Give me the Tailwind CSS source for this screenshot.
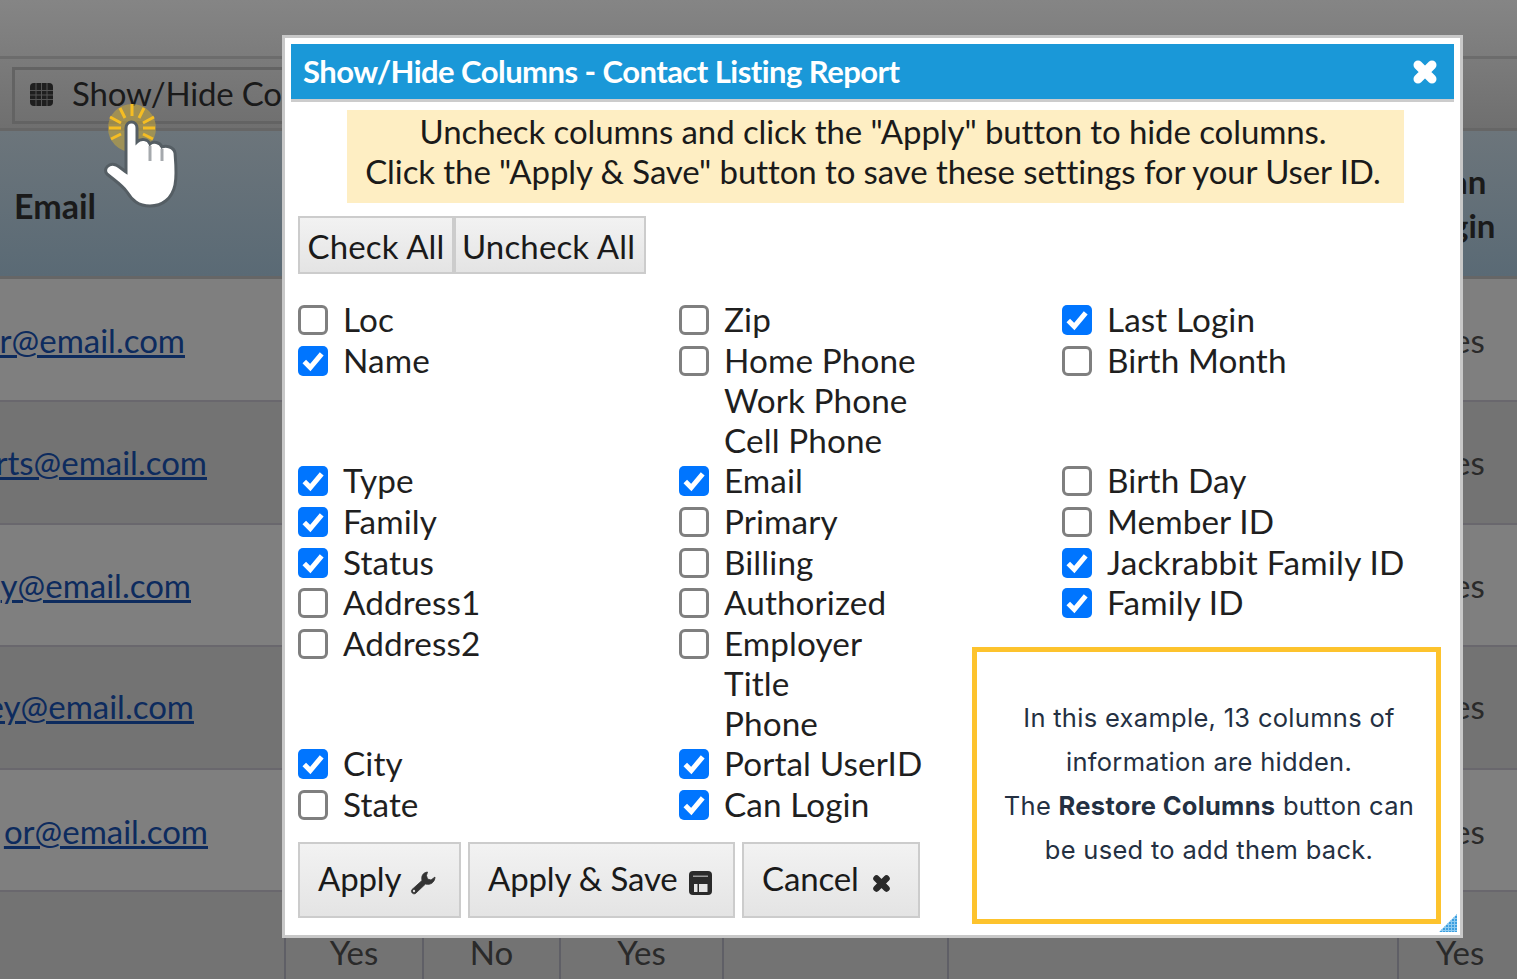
<!DOCTYPE html>
<html><head><script src="https://cdn.jsdelivr.net/npm/@tailwindcss/browser@4"></script></head>
<body class="m-0 overflow-hidden">
<div class="relative w-[1517px] h-[979px] overflow-hidden bg-[#737373] font-['Lato',sans-serif] text-[#1a1a1a]">
  <!-- page behind -->
  <div class="h-[59px] bg-gradient-to-b from-[#858585] to-[#7c7c7c] border-b-[3px] border-[#6c6c6c]"></div>
  <div class="h-[69px] bg-gradient-to-b from-[#7b7b7b] to-[#6f6f6f] pt-[8px] pl-[12px]">
    <div class="w-[400px] h-[57px] border-[3px] border-[#636363] flex items-center pl-[15px] gap-[19px] text-[33px] pb-[3px] tracking-[-0.2px]">
      <svg class="w-[23px] h-[23px]" viewBox="0 0 23 23"><rect width="23" height="23" rx="4" fill="#1f1f1f"/><path d="M0 7.5h23M0 12h23M0 16.5h23M6 0v23M11.5 0v23M17 0v23" stroke="#555" stroke-width="1"/></svg>
      <span class="whitespace-nowrap">Show/Hide Columns</span>
    </div>
  </div>
  <div class="h-[151px] bg-gradient-to-b from-[#6c757b] to-[#5a6a75] border-y-[3px] border-[#666] flex items-center relative">
    <span class="ml-[14px] text-[34px] font-bold mt-[4px]">Email</span>
    <span class="absolute left-[1451px] top-[28px] text-[33px] font-bold leading-[44px] whitespace-nowrap">an<br>gin</span>
  </div>
  <div class="text-[33px] text-[#0d2b5e]">
    <div class="h-[123px] bg-[#7f7f7f] border-b-[2px] border-[#69676d] leading-[44px] relative"><a class="underline decoration-[3px] absolute top-[39px] right-[1332px]">r@email.com</a><span class="absolute top-[39px] left-[1436px] text-[#2a2a2a]">Yes</span></div>
    <div class="h-[123px] bg-[#737373] border-b-[2px] border-[#69676d] leading-[44px] relative"><a class="underline decoration-[3px] absolute top-[38px] right-[1310px]">rts@email.com</a><span class="absolute top-[38px] left-[1436px] text-[#2a2a2a]">Yes</span></div>
    <div class="h-[122px] bg-[#7f7f7f] border-b-[2px] border-[#69676d] leading-[44px] relative"><a class="underline decoration-[3px] absolute top-[38px] right-[1326px]">y@email.com</a><span class="absolute top-[38px] left-[1436px] text-[#2a2a2a]">Yes</span></div>
    <div class="h-[123px] bg-[#737373] border-b-[2px] border-[#69676d] leading-[44px] relative"><a class="underline decoration-[3px] absolute top-[37px] right-[1323px]">ey@email.com</a><span class="absolute top-[37px] left-[1436px] text-[#2a2a2a]">Yes</span></div>
    <div class="h-[122px] bg-[#7f7f7f] border-b-[2px] border-[#69676d] leading-[44px] relative"><a class="underline decoration-[3px] absolute top-[39px] right-[1309px]">or@email.com</a><span class="absolute top-[39px] left-[1436px] text-[#2a2a2a]">Yes</span></div>
  </div>
  <div class="absolute left-[284px] top-[935px] h-[44px] flex text-[33px] text-[#2a2a2a] leading-[34px]">
    <div class="w-[140px] border-x-[2px] border-[#5f5f66] text-center">Yes</div>
    <div class="w-[137px] border-r-[2px] border-[#5f5f66] text-center">No</div>
    <div class="w-[163px] border-r-[2px] border-[#5f5f66] text-center">Yes</div>
    <div class="w-[225px] border-r-[2px] border-[#5f5f66]"></div>
    <div class="w-[450px] border-r-[2px] border-[#5f5f66]"></div>
    <div class="w-[122px] text-center">Yes</div>
  </div>

  <!-- hand -->
  <svg class="absolute left-[100px] top-[100px]" width="85" height="112" viewBox="0 0 85 112">
    <circle cx="32" cy="28" r="24" fill="#c9a93a" fill-opacity=".55"/>
    <g stroke="#f5bd22" stroke-width="3"><path d="M32 4v12M20 8l5 10M44 8l-5 10M10 17l11 6M54 17l-11 6M9 28h12M43 28h12M11 39l10-5M53 39l-10-5"/></g>
    <path d="M26 28C26 20 37 20 37 28V42C41 38 48 39 50 44C53 41 60 42 62 47C66 45 74 47 75 53C76 65 77 75 75 85C72 99 62 106 50 106C38 106 32 100 27 92C22 85 14 80 7 74C3 69 9 62 16 65C20 67 23 70 26 72Z" fill="#fff" stroke="#555e64" stroke-width="3"/>
    <path d="M50 46v15M62 49v12" stroke="#a5a9ad" stroke-width="3"/>
  </svg>

  <!-- modal -->
  <div class="absolute left-[282px] top-[35px] w-[1181px] h-[903px] bg-white border-[3px] border-[#c8c8c8] pt-[6px] pl-[6px] pr-[6px]">
    <div class="h-[58px] bg-[#1a98d8] border-b-[3px] border-[#cccccc] flex items-center justify-between pl-[12px] pr-[16px]">
      <span class="text-white font-bold text-[31px] tracking-[-0.54px] whitespace-nowrap">Show/Hide Columns - Contact Listing Report</span>
      <svg class="w-[26px] h-[26px]" viewBox="0 0 26 26"><path d="M6 6L20 20M20 6L6 20" stroke="#fff" stroke-width="9" stroke-linecap="round"/></svg>
    </div>
    <div class="ml-[56px] mt-[8px] w-[1057px] h-[93px] bg-[#feeec3] text-center text-[33px] leading-[40px] pt-[1px] pr-[5px] tracking-[-0.09px]">Uncheck columns and click the "Apply" button to hide columns.<br>Click the "Apply &amp; Save" button to save these settings for your User ID.</div>
    <div class="ml-[7px] mt-[13px] flex h-[58px] text-[33px] tracking-[0.15px]">
      <button class="w-[156px] pt-[3px] border-[2px] border-[#cccccc] bg-gradient-to-b from-[#f2f2f2] to-[#e4e4e4] text-[#1a1a1a]">Check All</button>
      <button class="w-[192px] pt-[3px] pr-[3px] border-[2px] border-[#cccccc] bg-gradient-to-b from-[#f2f2f2] to-[#e4e4e4] text-[#1a1a1a]">Uncheck All</button>
    </div>
    <div class="ml-[7px] mt-[25px] flex text-[33.3px] tracking-[0.1px] leading-[40px] text-[#1f1f1f]">
      <div class="w-[381px] shrink-0">
        <label class="flex items-center gap-[15px] h-[40.6px]"><input type="checkbox" class="mt-[2px] w-[30px] h-[30px] appearance-none rounded-[6px] border-[3px] border-[#7f7f7f] bg-white"><span>Loc</span></label>
        <label class="flex items-center gap-[15px] h-[40.6px]"><span class="mt-[2px] w-[30px] h-[30px] rounded-[5px] bg-[#0075ff] flex items-center justify-center"><svg width="24" height="24" viewBox="0 0 22 22"><path d="M3 11.5l5.5 5.5L19 4.5" fill="none" stroke="#fff" stroke-width="4.6"/></svg></span><span>Name</span></label>
        <div class="h-[80px]"></div>
        <label class="flex items-center gap-[15px] h-[40.6px]"><span class="mt-[2px] w-[30px] h-[30px] rounded-[5px] bg-[#0075ff] flex items-center justify-center"><svg width="24" height="24" viewBox="0 0 22 22"><path d="M3 11.5l5.5 5.5L19 4.5" fill="none" stroke="#fff" stroke-width="4.6"/></svg></span><span>Type</span></label>
        <label class="flex items-center gap-[15px] h-[40.6px]"><span class="mt-[2px] w-[30px] h-[30px] rounded-[5px] bg-[#0075ff] flex items-center justify-center"><svg width="24" height="24" viewBox="0 0 22 22"><path d="M3 11.5l5.5 5.5L19 4.5" fill="none" stroke="#fff" stroke-width="4.6"/></svg></span><span>Family</span></label>
        <label class="flex items-center gap-[15px] h-[40.6px]"><span class="mt-[2px] w-[30px] h-[30px] rounded-[5px] bg-[#0075ff] flex items-center justify-center"><svg width="24" height="24" viewBox="0 0 22 22"><path d="M3 11.5l5.5 5.5L19 4.5" fill="none" stroke="#fff" stroke-width="4.6"/></svg></span><span>Status</span></label>
        <label class="flex items-center gap-[15px] h-[40.6px]"><input type="checkbox" class="mt-[2px] w-[30px] h-[30px] appearance-none rounded-[6px] border-[3px] border-[#7f7f7f] bg-white"><span>Address1</span></label>
        <label class="flex items-center gap-[15px] h-[40.6px]"><input type="checkbox" class="mt-[2px] w-[30px] h-[30px] appearance-none rounded-[6px] border-[3px] border-[#7f7f7f] bg-white"><span>Address2</span></label>
        <div class="h-[80px]"></div>
        <label class="flex items-center gap-[15px] h-[40.6px]"><span class="mt-[2px] w-[30px] h-[30px] rounded-[5px] bg-[#0075ff] flex items-center justify-center"><svg width="24" height="24" viewBox="0 0 22 22"><path d="M3 11.5l5.5 5.5L19 4.5" fill="none" stroke="#fff" stroke-width="4.6"/></svg></span><span>City</span></label>
        <label class="flex items-center gap-[15px] h-[40.6px]"><input type="checkbox" class="mt-[2px] w-[30px] h-[30px] appearance-none rounded-[6px] border-[3px] border-[#7f7f7f] bg-white"><span>State</span></label>
      </div>
      <div class="w-[383px] shrink-0">
        <label class="flex items-center gap-[15px] h-[40.6px]"><input type="checkbox" class="mt-[2px] w-[30px] h-[30px] appearance-none rounded-[6px] border-[3px] border-[#7f7f7f] bg-white"><span>Zip</span></label>
        <label class="flex items-center gap-[15px] h-[40.6px]"><input type="checkbox" class="mt-[2px] w-[30px] h-[30px] appearance-none rounded-[6px] border-[3px] border-[#7f7f7f] bg-white"><span>Home Phone</span></label>
        <div class="pl-[45px] h-[40px]">Work Phone</div>
        <div class="pl-[45px] h-[40px]">Cell Phone</div>
        <label class="flex items-center gap-[15px] h-[40.6px]"><span class="mt-[2px] w-[30px] h-[30px] rounded-[5px] bg-[#0075ff] flex items-center justify-center"><svg width="24" height="24" viewBox="0 0 22 22"><path d="M3 11.5l5.5 5.5L19 4.5" fill="none" stroke="#fff" stroke-width="4.6"/></svg></span><span>Email</span></label>
        <label class="flex items-center gap-[15px] h-[40.6px]"><input type="checkbox" class="mt-[2px] w-[30px] h-[30px] appearance-none rounded-[6px] border-[3px] border-[#7f7f7f] bg-white"><span>Primary</span></label>
        <label class="flex items-center gap-[15px] h-[40.6px]"><input type="checkbox" class="mt-[2px] w-[30px] h-[30px] appearance-none rounded-[6px] border-[3px] border-[#7f7f7f] bg-white"><span>Billing</span></label>
        <label class="flex items-center gap-[15px] h-[40.6px]"><input type="checkbox" class="mt-[2px] w-[30px] h-[30px] appearance-none rounded-[6px] border-[3px] border-[#7f7f7f] bg-white"><span>Authorized</span></label>
        <label class="flex items-center gap-[15px] h-[40.6px]"><input type="checkbox" class="mt-[2px] w-[30px] h-[30px] appearance-none rounded-[6px] border-[3px] border-[#7f7f7f] bg-white"><span>Employer</span></label>
        <div class="pl-[45px] h-[40px]">Title</div>
        <div class="pl-[45px] h-[40px]">Phone</div>
        <label class="flex items-center gap-[15px] h-[40.6px]"><span class="mt-[2px] w-[30px] h-[30px] rounded-[5px] bg-[#0075ff] flex items-center justify-center"><svg width="24" height="24" viewBox="0 0 22 22"><path d="M3 11.5l5.5 5.5L19 4.5" fill="none" stroke="#fff" stroke-width="4.6"/></svg></span><span>Portal UserID</span></label>
        <label class="flex items-center gap-[15px] h-[40.6px]"><span class="mt-[2px] w-[30px] h-[30px] rounded-[5px] bg-[#0075ff] flex items-center justify-center"><svg width="24" height="24" viewBox="0 0 22 22"><path d="M3 11.5l5.5 5.5L19 4.5" fill="none" stroke="#fff" stroke-width="4.6"/></svg></span><span>Can Login</span></label>
      </div>
      <div class="flex-1">
        <label class="flex items-center gap-[15px] h-[40.6px]"><span class="mt-[2px] w-[30px] h-[30px] rounded-[5px] bg-[#0075ff] flex items-center justify-center"><svg width="24" height="24" viewBox="0 0 22 22"><path d="M3 11.5l5.5 5.5L19 4.5" fill="none" stroke="#fff" stroke-width="4.6"/></svg></span><span>Last Login</span></label>
        <label class="flex items-center gap-[15px] h-[40.6px]"><input type="checkbox" class="mt-[2px] w-[30px] h-[30px] appearance-none rounded-[6px] border-[3px] border-[#7f7f7f] bg-white"><span>Birth Month</span></label>
        <div class="h-[80px]"></div>
        <label class="flex items-center gap-[15px] h-[40.6px]"><input type="checkbox" class="mt-[2px] w-[30px] h-[30px] appearance-none rounded-[6px] border-[3px] border-[#7f7f7f] bg-white"><span>Birth Day</span></label>
        <label class="flex items-center gap-[15px] h-[40.6px]"><input type="checkbox" class="mt-[2px] w-[30px] h-[30px] appearance-none rounded-[6px] border-[3px] border-[#7f7f7f] bg-white"><span>Member ID</span></label>
        <label class="flex items-center gap-[15px] h-[40.6px]"><span class="mt-[2px] w-[30px] h-[30px] rounded-[5px] bg-[#0075ff] flex items-center justify-center"><svg width="24" height="24" viewBox="0 0 22 22"><path d="M3 11.5l5.5 5.5L19 4.5" fill="none" stroke="#fff" stroke-width="4.6"/></svg></span><span class="tracking-[0.25px]">Jackrabbit Family ID</span></label>
        <label class="flex items-center gap-[15px] h-[40.6px]"><span class="mt-[2px] w-[30px] h-[30px] rounded-[5px] bg-[#0075ff] flex items-center justify-center"><svg width="24" height="24" viewBox="0 0 22 22"><path d="M3 11.5l5.5 5.5L19 4.5" fill="none" stroke="#fff" stroke-width="4.6"/></svg></span><span>Family ID</span></label>
      </div>
    </div>
    <div class="ml-[7px] mt-[18px] flex gap-[7px] h-[76px] text-[33px] text-[#1a1a1a] tracking-[-0.15px]">
      <button class="w-[163px] border-[2px] border-[#cccccc] bg-gradient-to-b from-[#f2f2f2] to-[#e4e4e4] flex items-center pl-[18px] pb-[4px] gap-[9px]">Apply
        <svg class="w-[26px] h-[24px] mt-[10px]" viewBox="0 0 26 24"><path d="M17.5 1C13 1.500 11 5 12 9.500L2 18.500C0 21 3.500 24.500 6 22L15.500 13C20.500 14.500 25 11 25 6L21 9L17.500 8L16.500 4.500Z" fill="#333" stroke="#333" stroke-width=".8"/><circle cx="4" cy="20" r="1.200" fill="#ddd"/></svg></button>
      <button class="w-[267px] border-[2px] border-[#cccccc] bg-gradient-to-b from-[#f2f2f2] to-[#e4e4e4] flex items-center pl-[18px] pb-[4px] gap-[11px]">Apply &amp; Save
        <svg class="w-[23px] h-[24px] mt-[10px]" viewBox="0 0 23 24"><rect width="23" height="24" rx="4" fill="#2a2a2a"/><path d="M4 4.500h15v1.500H4z" fill="#9a9a9a"/><path d="M5 13h3.500v8H5zM10 13h8.500v8H10z" fill="#e4e4e4"/></svg></button>
      <button class="w-[178px] border-[2px] border-[#cccccc] bg-gradient-to-b from-[#f2f2f2] to-[#e4e4e4] flex items-center pl-[18px] pb-[4px] gap-[13px]">Cancel
        <svg class="w-[19px] h-[19px] mt-[10px]" viewBox="0 0 19 19"><path d="M4.500 4.500L14.500 14.500M14.500 4.500L4.500 14.500" stroke="#2a2a2a" stroke-width="6.500" stroke-linecap="round"/></svg></button>
    </div>
    <!-- annotation -->
    <div class="absolute left-[687px] top-[609px] w-[469px] h-[277px] border-[5px] border-[#fdc32d] bg-white flex flex-col items-center justify-center text-center text-[25.500px] tracking-[0.3px] leading-[44px] text-[#243042] font-['Inter',sans-serif] pl-[5px] pb-[4px]">
      <p class="whitespace-nowrap">In this example, 13 columns of</p>
      <p class="whitespace-nowrap">information are hidden.</p>
      <p class="whitespace-nowrap">The <b>Restore Columns</b> button can</p>
      <p class="whitespace-nowrap">be used to add them back.</p>
    </div>
    <svg class="absolute right-[3px] bottom-[2px]" width="20" height="20" viewBox="0 0 20 20"><defs><pattern id="d" width="3" height="3" patternUnits="userSpaceOnUse"><rect width="3" height="3" fill="#8ecbf0"/><rect width="2" height="2" fill="#3d9fe0"/></pattern></defs><path d="M20 1V19H2z" fill="url(#d)"/></svg>
  </div>
</div>
</body></html>
